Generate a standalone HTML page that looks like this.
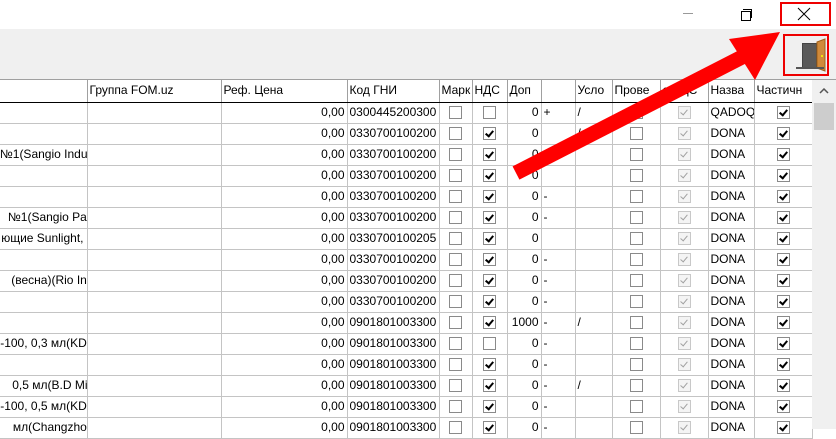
<!DOCTYPE html>
<html><head><meta charset="utf-8"><style>
body{margin:0;width:836px;height:429px;overflow:hidden;background:#fff;font-family:"Liberation Sans",Arial,sans-serif;font-size:12px;position:relative}
.tb{position:absolute;left:0;top:0;width:836px;height:29px;background:#fff}
.tool{position:absolute;left:0;top:29px;width:836px;height:50px;background:#f0f0f0;border-bottom:1px solid #a0a0a0}
table{position:absolute;left:0;top:80px;border-collapse:collapse;table-layout:fixed;width:812px}
td{height:20px;padding:0 2px;border-right:1px solid #c4c4c4;border-bottom:1px solid #c4c4c4;white-space:nowrap;overflow:hidden;box-sizing:border-box;line-height:19px;position:relative}
tr.h td{height:22px;border-bottom:1px solid #000;border-right:1px solid #a0a0a0;background:#fff}
tr:not(.h) td{height:21px}
.r{text-align:right}.c{text-align:center}
.f span{position:absolute;right:-7px;top:0}
.cb{display:inline-block;width:13px;height:13px;box-sizing:border-box;border:1px solid #8a8a8a;background:#fff;vertical-align:middle;position:relative}
.cb.k::after{content:"";position:absolute;left:3px;top:1px;width:3px;height:6px;border:solid #000;border-width:0 2px 2px 0;transform:rotate(40deg)}
.cb.g{border-color:#c8c8c8;background:#f4f4f4}
.cb.g::after{content:"";position:absolute;left:3px;top:1px;width:3px;height:6px;border:solid #a0a0a0;border-width:0 1px 1px 0;transform:rotate(40deg)}
.sb{position:absolute;left:812px;top:80px;width:24px;height:349px;background:#f0f0f0}
</style></head><body>
<div class="tb">
<div style="position:absolute;left:683px;top:13px;width:10px;height:1px;background:#999"></div>
<div style="position:absolute;left:741px;top:11px;width:8px;height:8px;border:1px solid #000"></div>
<div style="position:absolute;left:743px;top:9px;width:8px;height:8px;border-top:1px solid #000;border-right:1px solid #000"></div>
<div style="position:absolute;left:780px;top:2px;width:51px;height:24px;border:2px solid #e00;box-sizing:border-box"></div>
<svg style="position:absolute;left:797px;top:7px" width="14" height="14"><path d="M1 1L13 13M13 1L1 13" stroke="#000" stroke-width="1"/></svg>
</div>
<div class="tool">
<div style="position:absolute;left:783px;top:5px;width:46px;height:42px;border:2px solid #e00;box-sizing:border-box"></div>
<svg style="position:absolute;left:786px;top:8px" width="40" height="36"><rect x="16" y="6" width="15" height="25" fill="#444"/><rect x="17" y="7" width="13" height="24" fill="#5a5a5a"/><polygon points="31,5 39,2 39,34 31,31" fill="#d08a3a" stroke="#a0601a"/><circle cx="36" cy="19" r="1" fill="#ff0"/><rect x="10" y="30" width="28" height="2" fill="#555"/></svg>
</div>
<table>
<colgroup><col style="width:87px"><col style="width:134px"><col style="width:126px"><col style="width:92px"><col style="width:33px"><col style="width:35px"><col style="width:34px"><col style="width:34px"><col style="width:37px"><col style="width:48px"><col style="width:48px"><col style="width:46px"><col style="width:58px"></colgroup>
<tr class="h"><td></td><td>Группа FOM.uz</td><td>Реф. Цена</td><td>Код ГНИ</td><td>Марк</td><td>НДС</td><td>Доп</td><td></td><td>Усло</td><td>Прове</td><td>с НДС</td><td>Назва</td><td>Частичн</td></tr>
<tr><td></td><td></td><td class="r">0,00</td><td>0300445200300</td><td class="c"><i class="cb"></i></td><td class="c"><i class="cb"></i></td><td class="r">0</td><td>+</td><td>/</td><td class="c"><i class="cb"></i></td><td class="c"><i class="cb g"></i></td><td>QADOQ</td><td class="c"><i class="cb k"></i></td></tr>
<tr><td></td><td></td><td class="r">0,00</td><td>0330700100200</td><td class="c"><i class="cb"></i></td><td class="c"><i class="cb k"></i></td><td class="r">0</td><td></td><td>/</td><td class="c"><i class="cb"></i></td><td class="c"><i class="cb g"></i></td><td>DONA</td><td class="c"><i class="cb k"></i></td></tr>
<tr><td class="f"><span>№1(Sangio Indus</span></td><td></td><td class="r">0,00</td><td>0330700100200</td><td class="c"><i class="cb"></i></td><td class="c"><i class="cb k"></i></td><td class="r">0</td><td></td><td></td><td class="c"><i class="cb"></i></td><td class="c"><i class="cb g"></i></td><td>DONA</td><td class="c"><i class="cb k"></i></td></tr>
<tr><td></td><td></td><td class="r">0,00</td><td>0330700100200</td><td class="c"><i class="cb"></i></td><td class="c"><i class="cb k"></i></td><td class="r">0</td><td></td><td></td><td class="c"><i class="cb"></i></td><td class="c"><i class="cb g"></i></td><td>DONA</td><td class="c"><i class="cb k"></i></td></tr>
<tr><td></td><td></td><td class="r">0,00</td><td>0330700100200</td><td class="c"><i class="cb"></i></td><td class="c"><i class="cb k"></i></td><td class="r">0</td><td>-</td><td></td><td class="c"><i class="cb"></i></td><td class="c"><i class="cb g"></i></td><td>DONA</td><td class="c"><i class="cb k"></i></td></tr>
<tr><td class="f"><span>№1(Sangio Pap</span></td><td></td><td class="r">0,00</td><td>0330700100200</td><td class="c"><i class="cb"></i></td><td class="c"><i class="cb k"></i></td><td class="r">0</td><td>-</td><td></td><td class="c"><i class="cb"></i></td><td class="c"><i class="cb g"></i></td><td>DONA</td><td class="c"><i class="cb k"></i></td></tr>
<tr><td class="f"><span>ющие Sunlight, L</span></td><td></td><td class="r">0,00</td><td>0330700100205</td><td class="c"><i class="cb"></i></td><td class="c"><i class="cb k"></i></td><td class="r">0</td><td></td><td></td><td class="c"><i class="cb"></i></td><td class="c"><i class="cb g"></i></td><td>DONA</td><td class="c"><i class="cb k"></i></td></tr>
<tr><td></td><td></td><td class="r">0,00</td><td>0330700100200</td><td class="c"><i class="cb"></i></td><td class="c"><i class="cb k"></i></td><td class="r">0</td><td>-</td><td></td><td class="c"><i class="cb"></i></td><td class="c"><i class="cb g"></i></td><td>DONA</td><td class="c"><i class="cb k"></i></td></tr>
<tr><td class="f"><span>&nbsp;(весна)(Rio Ind</span></td><td></td><td class="r">0,00</td><td>0330700100200</td><td class="c"><i class="cb"></i></td><td class="c"><i class="cb k"></i></td><td class="r">0</td><td>-</td><td></td><td class="c"><i class="cb"></i></td><td class="c"><i class="cb g"></i></td><td>DONA</td><td class="c"><i class="cb k"></i></td></tr>
<tr><td></td><td></td><td class="r">0,00</td><td>0330700100200</td><td class="c"><i class="cb"></i></td><td class="c"><i class="cb k"></i></td><td class="r">0</td><td>-</td><td></td><td class="c"><i class="cb"></i></td><td class="c"><i class="cb g"></i></td><td>DONA</td><td class="c"><i class="cb k"></i></td></tr>
<tr><td></td><td></td><td class="r">0,00</td><td>0901801003300</td><td class="c"><i class="cb"></i></td><td class="c"><i class="cb k"></i></td><td class="r">1000</td><td>-</td><td>/</td><td class="c"><i class="cb"></i></td><td class="c"><i class="cb g"></i></td><td>DONA</td><td class="c"><i class="cb k"></i></td></tr>
<tr><td class="f"><span>-100, 0,3 мл(KDL</span></td><td></td><td class="r">0,00</td><td>0901801003300</td><td class="c"><i class="cb"></i></td><td class="c"><i class="cb"></i></td><td class="r">0</td><td>-</td><td></td><td class="c"><i class="cb"></i></td><td class="c"><i class="cb g"></i></td><td>DONA</td><td class="c"><i class="cb k"></i></td></tr>
<tr><td></td><td></td><td class="r">0,00</td><td>0901801003300</td><td class="c"><i class="cb"></i></td><td class="c"><i class="cb k"></i></td><td class="r">0</td><td>-</td><td></td><td class="c"><i class="cb"></i></td><td class="c"><i class="cb g"></i></td><td>DONA</td><td class="c"><i class="cb k"></i></td></tr>
<tr><td class="f"><span>&nbsp;0,5 мл(B.D Mic</span></td><td></td><td class="r">0,00</td><td>0901801003300</td><td class="c"><i class="cb"></i></td><td class="c"><i class="cb k"></i></td><td class="r">0</td><td>-</td><td>/</td><td class="c"><i class="cb"></i></td><td class="c"><i class="cb g"></i></td><td>DONA</td><td class="c"><i class="cb k"></i></td></tr>
<tr><td class="f"><span>-100, 0,5 мл(KDL</span></td><td></td><td class="r">0,00</td><td>0901801003300</td><td class="c"><i class="cb"></i></td><td class="c"><i class="cb k"></i></td><td class="r">0</td><td>-</td><td></td><td class="c"><i class="cb"></i></td><td class="c"><i class="cb g"></i></td><td>DONA</td><td class="c"><i class="cb k"></i></td></tr>
<tr><td class="f"><span>&nbsp;мл(Changzhou</span></td><td></td><td class="r">0,00</td><td>0901801003300</td><td class="c"><i class="cb"></i></td><td class="c"><i class="cb k"></i></td><td class="r">0</td><td>-</td><td></td><td class="c"><i class="cb"></i></td><td class="c"><i class="cb g"></i></td><td>DONA</td><td class="c"><i class="cb k"></i></td></tr>
</table>
<div class="sb">
<svg style="position:absolute;left:7px;top:8px" width="10" height="6"><path d="M1 5L5 1L9 5" stroke="#555" stroke-width="1.5" fill="none"/></svg>
<div style="position:absolute;left:2px;top:23px;width:20px;height:27px;background:#cdcdcd"></div>
</div>
<svg style="position:absolute;left:0;top:0" width="836" height="429"><line x1="516" y1="173" x2="748" y2="54" stroke="#f00" stroke-width="15"/><polygon points="729,39 780,32 755,80" fill="#f00"/></svg>
</body></html>
